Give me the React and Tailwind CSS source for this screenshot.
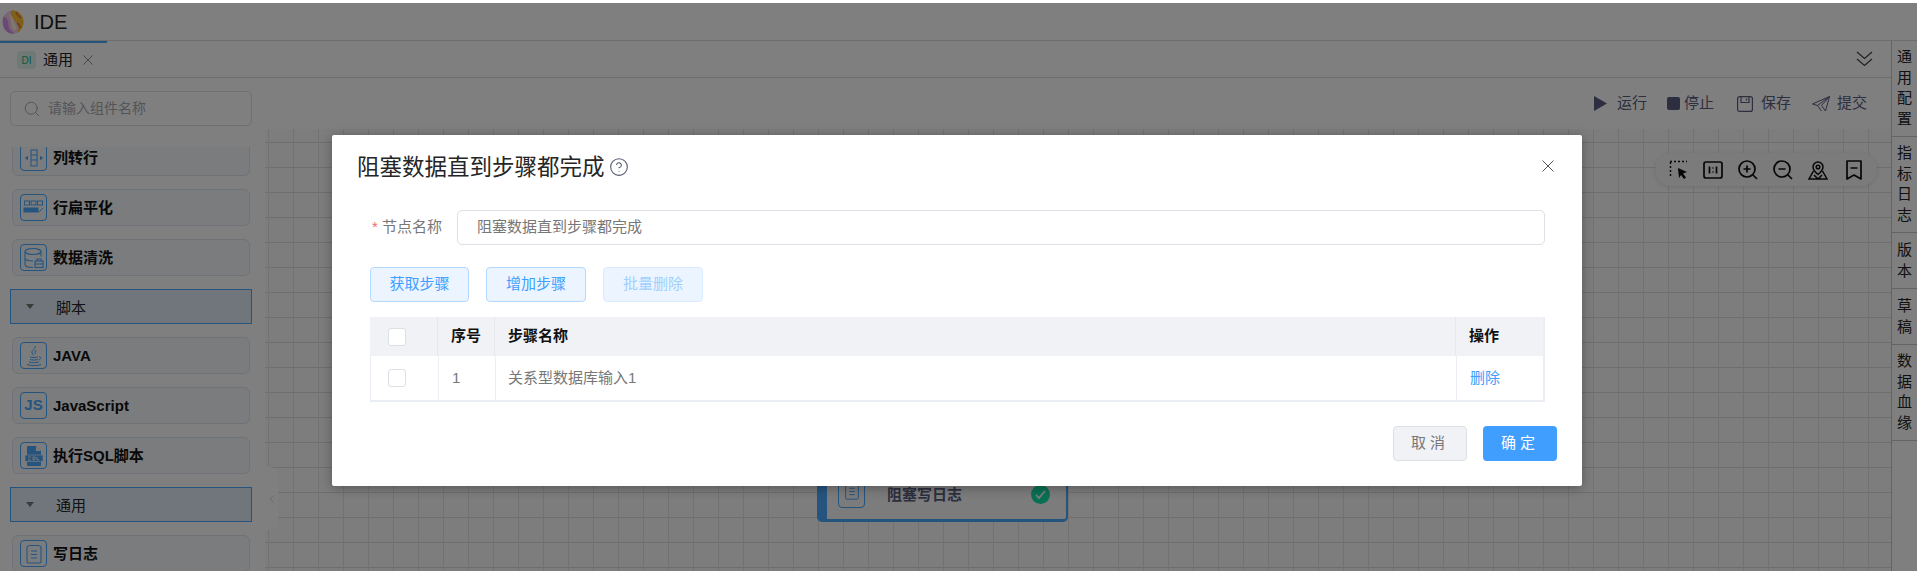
import React from "react";
import { Search, CircleHelp, ChevronLeft } from "lucide-react";

const Box = ({ children }) => (
  <span className="flex h-[27px] w-[27px] shrink-0 items-center justify-center rounded-[4px] border border-[#4aa8ff] text-[#4aa8ff]">
    {children}
  </span>
);

const Cross = ({ size, color, className }) => (
  <svg className={className} width={size} height={size} viewBox="0 0 12 12" fill="none" stroke={color} strokeWidth="1">
    <path d="M.5.500l11 11M11.500.500l-11 11" />
  </svg>
);

const IconPivot = () => (
  <svg width="20" height="20" viewBox="0 0 20 20" fill="none" stroke="currentColor" strokeWidth="1">
    <rect x="7" y="2" width="6" height="16" />
    <path d="M7 7h6M7 12h6" />
    <path d="M1.500 10l2-1.500v3zM18.500 10l-2-1.500v3z" fill="currentColor" />
  </svg>
);
const IconFlat = () => (
  <svg width="22" height="20" viewBox="0 0 22 20" fill="none" stroke="currentColor">
    <rect x="1.500" y="3" width="5" height="4" />
    <rect x="8" y="3" width="5" height="4" />
    <rect x="14.500" y="3" width="5" height="4" />
    <rect x="1" y="10" width="14" height="4" fill="currentColor" />
    <path d="M16 14l4-4" />
  </svg>
);
const IconDb = () => (
  <svg width="22" height="22" viewBox="0 0 22 22" fill="none" stroke="currentColor" strokeWidth="1.100">
    <ellipse cx="10" cy="4.500" rx="8" ry="3" />
    <path d="M2 4.500v13c0 1.700 3.500 3 8 3M18 4.500v5M2 11c0 1.700 3.500 3 8 3" />
    <rect x="12" y="14" width="8" height="6.500" />
    <path d="M14 14v-2h4v2M12 17h8" />
  </svg>
);
const IconJava = () => (
  <svg width="20" height="22" viewBox="0 0 20 22" fill="none" stroke="currentColor" strokeWidth="1">
    <path d="M11 1c1 3-4 4-3 7 .3 1 1 1.500 1.500 2.500M12 5c-1 1.500-1.500 2.500-.5 4" />
    <path d="M6 12c2 .7 6 .7 8-.2M6 14.500c2 .7 6 .7 8 0M5 17c3 1 8 1 10-.2M3 19.500c4 1.500 11 1.500 14 0M15 12c2-.5 3 1.500 0 3" />
  </svg>
);
const IconSql = () => (
  <svg width="20" height="22" viewBox="0 0 20 22">
    <path d="M4 1h8l5 5v14a1 1 0 0 1-1 1H4a1 1 0 0 1-1-1V2a1 1 0 0 1 1-1z" fill="currentColor" />
    <rect x="1" y="10" width="18" height="6.500" rx="1" fill="currentColor" stroke="#f3f7fb" strokeWidth="0.700" />
    <path d="M12 1v5h5z" fill="#f3f7fb" />
    <path d="M4 12h3M4 15h3M9 12h2v3H9zM13 12v3h2.500" stroke="#f3f7fb" strokeWidth="0.900" fill="none" />
  </svg>
);
const IconLog = ({ size = 22 }) => (
  <svg width={size} height={size} viewBox="0 0 22 22" fill="none" stroke="currentColor" strokeWidth="1.100">
    <path d="M6 3h-.5A1.500 1.500 0 0 0 4 4.500v14A1.500 1.500 0 0 0 5.500 20h11a1.500 1.500 0 0 0 1.500-1.500v-14A1.500 1.500 0 0 0 16.500 3H16" />
    <path d="M6 2.500h10M8 8h6M8 11.500h6M8 15h6" />
  </svg>
);

const Item = ({ icon, children }) => (
  <div className="flex h-[37px] items-center gap-[6px] rounded-[6px] border border-[#dfe5ec] bg-[#f4f8fc] pl-[7px] text-[15px] font-bold text-[#111]">
    {icon}
    <span className="pt-[2px]">{children}</span>
  </div>
);

const Group = ({ children }) => (
  <div className="-mx-[2px] flex h-[35px] items-center border border-[#4aa8ff] bg-[#e2ecf8] text-[15px] text-[#222]">
    <span className="ml-[15px] h-0 w-0 border-x-[4px] border-t-[5px] border-x-transparent border-t-[#777]"></span>
    <span className="ml-[22px] pt-[3px]">{children}</span>
  </div>
);

const Tool = ({ icon, label, gap }) => (
  <div className={`flex items-center ${gap}`}>
    {icon}
    <span>{label}</span>
  </div>
);

const Side = ({ children, pad }) => (
  <div className={`flex justify-center border-b border-[#c9c9c9] pb-[7px] text-[15px] leading-[20.500px] ${pad}`}>
    <span className="w-[15px] break-all">{children}</span>
  </div>
);

export default function App() {
  return (
    <div
      className="relative flex h-[571px] flex-col overflow-hidden bg-white text-[#303133]"
      style={{ fontFamily: '"Liberation Sans","Noto Sans CJK SC",sans-serif' }}
    >
      {/* top bar */}
      <header className="flex h-[41px] shrink-0 items-center border-b border-[#d8d8d8] pt-[3px]">
        <svg className="ml-[2px]" width="22" height="24" viewBox="0 0 22 24">
          <ellipse cx="11" cy="12" rx="10.500" ry="11.500" fill="#f0c8e8" />
          <path d="M9 .5c7-1 12.500 4.500 12.500 11.500 0 5-3 9-6.500 11 2.500-4.500 2-8-1-11-3-3-5.500-6.500-5-11.500z" fill="#ffc030" />
          <path d="M1.500 6.500c3 1 5 4 5 8s2.500 7 6 9c-5.500 1-10.500-3-11.500-8.500-.4-3 0-6 .5-8.500z" fill="#d890ec" />
          <path d="M6 3c3 2 5 5 6 8s2 5 3 7c-1 1.500-2 2.500-3 3-2-3-3-6-3-9s-1-6-3-9z" fill="#fff0d8" />
          <path d="M14 2c1 3 3 5 5 6M15 13c2 1 3 3 3 5" stroke="#e07828" strokeWidth="1.500" fill="none" />
        </svg>
        <span className="ml-[10px] text-[20px] text-[#222]">IDE</span>
      </header>

      <div className="flex min-h-0 flex-1">
        <div className="flex min-w-0 flex-1 flex-col">
          {/* tab bar */}
          <div className="flex h-[37px] shrink-0 items-center border-b border-[#d8d8d8] pr-[18px]">
            <div className="flex h-full w-[107px] items-center border-t-2 border-[#4aa8ff] pl-[17px]">
              <span className="flex h-[18px] w-[19px] items-center justify-center rounded-[4px] bg-[#dff5ee] text-[10px] text-[#12b080]">DI</span>
              <span className="ml-[7px] text-[15px] text-[#222]">通用</span>
              <Cross className="ml-[10px]" size={10} color="#777" />
            </div>
            <svg className="ml-auto" width="17" height="16" viewBox="0 0 17 16" fill="none" stroke="#444" strokeWidth="1.200">
              <path d="M1 1l7.500 6.500L16 1M1 8l7.500 6.500L16 8" />
            </svg>
          </div>

          <div className="flex min-h-0 flex-1">
            <aside className="flex w-[265px] shrink-0 flex-col pl-[10px] pr-[13px] pt-[13px]">
              <div className="flex h-[35px] shrink-0 items-center rounded-[5px] border border-[#dcdfe6] pl-[12px] text-[14px] text-[#a8abb2]">
                <Search size={18} strokeWidth={1.100} color="#999" />
                <span className="ml-[7px]">请输入组件名称</span>
              </div>
              <div className="mt-[21px] min-h-0 flex-1 overflow-hidden px-[2px]">
                <div className="-mt-[8px] flex flex-col gap-[13px]">
                  <Item icon={<Box><IconPivot /></Box>}>列转行</Item>
                  <Item icon={<Box><IconFlat /></Box>}>行扁平化</Item>
                  <Item icon={<Box><IconDb /></Box>}>数据清洗</Item>
                  <Group>脚本</Group>
                  <Item icon={<Box><IconJava /></Box>}>JAVA</Item>
                  <Item icon={<Box><span className="text-[15px] font-bold">JS</span></Box>}>JavaScript</Item>
                  <Item icon={<Box><IconSql /></Box>}>执行SQL脚本</Item>
                  <Group>通用</Group>
                  <Item icon={<Box><IconLog /></Box>}>写日志</Item>
                </div>
              </div>
            </aside>

            <main className="flex min-w-0 flex-1 flex-col">
              <div className="flex h-[51px] shrink-0 items-center justify-end pr-[24px] text-[15px] text-[#5a5d80]">
                <Tool
                  gap="gap-[10px]"
                  label="运行"
                  icon={<svg width="13" height="15" viewBox="0 0 13 15"><path d="M0 0l13 7.500L0 15z" fill="#5a5d80" /></svg>}
                />
                <div className="ml-[20px]">
                  <Tool
                    gap="gap-[4px]"
                    label="停止"
                    icon={<span className="h-[13px] w-[13px] rounded-[2px] bg-[#5a5d80]"></span>}
                  />
                </div>
                <div className="ml-[23px]">
                  <Tool
                    gap="gap-[8px]"
                    label="保存"
                    icon={
                      <svg width="16" height="16" viewBox="0 0 16 16" fill="none" stroke="#5a5d80" strokeWidth="1.200">
                        <rect x="0.600" y="0.600" width="14.800" height="14.800" rx="2" />
                        <path d="M4 1v5.500h8V1M9.500 2.500v2" />
                      </svg>
                    }
                  />
                </div>
                <div className="ml-[21px]">
                  <Tool
                    gap="gap-[7px]"
                    label="提交"
                    icon={
                      <svg width="18" height="16" viewBox="0 0 18 16" fill="none" stroke="#5a5d80" strokeWidth="1">
                        <path d="M17.500.500L.500 8l5 1.500L17.500.500l-4 14.500-4-5.500zM5.500 9.500L9.500 15" />
                      </svg>
                    }
                  />
                </div>
              </div>

              <div className="relative min-h-0 flex-1 bg-[#fafafa] bg-[linear-gradient(to_right,#e4e4e4_1px,transparent_1px),linear-gradient(to_bottom,#dcdcdc_1px,transparent_1px)] bg-[size:25px_25px] bg-[position:3px_13px]">
                {/* collapse handle */}
                <div className="absolute left-0 top-[338px] flex h-[63px] w-[13px] items-center justify-center rounded-r-[8px] bg-white">
                  <ChevronLeft size={22} strokeWidth={0.900} color="#aaa" />
                </div>

                {/* node on the canvas */}
                <div className="absolute left-[552px] top-[300px] flex h-[93px] w-[251px] items-end rounded-[5px] border-b-[3px] border-l-[10px] border-r-2 border-t-2 border-[#4aa8ff] bg-[#f8f8f8] pb-[11px]">
                  <span className="ml-[11px] flex h-[34px] w-[27px] items-center justify-center rounded-[4px] border border-[#4aa8ff] text-[#4aa8ff]">
                    <IconLog size={20} />
                  </span>
                  <span className="mb-[2px] ml-[22px] text-[15px] font-bold text-[#5a5d80]">阻塞写日志</span>
                  <svg className="mb-[4px] ml-auto mr-[16px]" width="19" height="19" viewBox="0 0 19 19">
                    <circle cx="9.500" cy="9.500" r="9.500" fill="#14e0a8" />
                    <path d="M5 10l3 3 6-7" fill="none" stroke="#fff" strokeWidth="1.600" />
                  </svg>
                </div>

                {/* floating tools */}
                <div className="absolute left-[1390px] top-[24px] flex h-[33px] w-[222px] items-center rounded-full bg-[#f6f6f6] pl-[14px] text-[#0c0c0c] shadow-[0_1px_4px_rgba(0,0,0,0.12)]">
                  <svg width="20" height="20" viewBox="0 0 20 20" fill="none" stroke="currentColor">
                    <path d="M1 1.500h17M1.500 2v15" strokeDasharray="2 2" strokeWidth="1.400" />
                    <path d="M9 8l9 4-4 1.500 3 4-2 1.500-3-4-2 3z" fill="currentColor" stroke="none" />
                  </svg>
                  <svg className="ml-[14px]" width="20" height="18" viewBox="0 0 20 18" fill="none" stroke="currentColor" strokeWidth="1.700" strokeLinejoin="round">
                    <rect x="1" y="1" width="18" height="16" rx="2" />
                    <path d="M6.500 5.500v7M13.500 5.500v7M10 6.500v1M10 10.500v1" />
                  </svg>
                  <svg className="ml-[15px]" width="20" height="20" viewBox="0 0 20 20" fill="none" stroke="currentColor" strokeWidth="1.700">
                    <circle cx="9" cy="9" r="8" />
                    <path d="M15 15l4 4M9 5.500v7M5.500 9h7" />
                  </svg>
                  <svg className="ml-[15px]" width="20" height="20" viewBox="0 0 20 20" fill="none" stroke="currentColor" strokeWidth="1.700">
                    <circle cx="9" cy="9" r="8" />
                    <path d="M15 15l4 4M5.500 9h7" />
                  </svg>
                  <svg className="ml-[15px]" width="20" height="20" viewBox="0 0 20 20" fill="none" stroke="currentColor" strokeWidth="1.500">
                    <path d="M10 14.500c-3-2.500-5-4.500-5-7.500a5 5 0 0 1 10 0c0 3-2 5-5 7.500z" />
                    <circle cx="10" cy="7" r="1.800" />
                    <path d="M5.500 11L1 19h18l-4.500-8M6 15l4 4 4-4" />
                  </svg>
                  <svg className="ml-[17px]" width="18" height="20" viewBox="0 0 18 20" fill="none" stroke="currentColor" strokeWidth="1.700" strokeLinejoin="round">
                    <path d="M2 1h14v18l-7-4-7 4zM5.500 8h7" />
                  </svg>
                </div>
              </div>
            </main>
          </div>
        </div>

        {/* right rail */}
        <div className="w-[26px] shrink-0 border-l border-[#c9c9c9] text-[#222]">
          <Side pad="pt-[6px]">通用配置</Side>
          <Side pad="pt-[6px]">指标日志</Side>
          <Side pad="pt-[7px]">版本</Side>
          <Side pad="pt-[7px]">草稿</Side>
          <Side pad="pt-[6px]">数据血缘</Side>
        </div>
      </div>

      {/* modal mask */}
      <div className="absolute inset-x-0 bottom-0 top-[3px] bg-black/50"></div>

      {/* dialog */}
      <div className="absolute left-[332px] top-[135px] flex h-[351px] w-[1250px] flex-col rounded-[2px] bg-white shadow-[0_2px_12px_rgba(0,0,0,0.3)]">
        <div className="relative flex h-[75px] shrink-0 items-start pl-[25px] pt-[17px]">
          <span className="text-[22.500px] leading-[32px] text-[#262626]">阻塞数据直到步骤都完成</span>
          <CircleHelp className="ml-[4px] mt-[5px]" size={20} strokeWidth={1.300} color="#555a70" />
          <Cross className="absolute right-[28px] top-[25px]" size={12} color="#555" />
        </div>

        <div className="flex h-[35px] shrink-0 items-center pl-[40px] pr-[37px] text-[15px]">
          <span className="w-[10px] text-[#f56c6c]">*</span>
          <span className="w-[75px] text-[#777]">节点名称</span>
          <div className="flex h-full flex-1 items-center rounded-[5px] border border-[#dcdfe6] pl-[19px] text-[#777]">阻塞数据直到步骤都完成</div>
        </div>

        <div className="mt-[22px] flex shrink-0 gap-[17px] pl-[38px] text-[15px]">
          <div className="flex h-[35px] w-[99px] items-center justify-center rounded-[4px] border border-[#b3d8ff] bg-[#ecf5ff] text-[#409eff]">获取步骤</div>
          <div className="flex h-[35px] w-[100px] items-center justify-center rounded-[4px] border border-[#b3d8ff] bg-[#ecf5ff] text-[#409eff]">增加步骤</div>
          <div className="flex h-[35px] w-[100px] items-center justify-center rounded-[4px] border border-[#d9ecff] bg-[#ecf5ff] text-[#a0cfff]">批量删除</div>
        </div>

        <div className="ml-[38px] mr-[37px] mt-[15px] shrink-0 border-b-2 border-r-2 border-[#ebeef5] text-[15px]">
          <div className="grid h-[39px] grid-cols-[68px_57px_961px_1fr] bg-[#f0f2f5] font-bold text-[#111]">
            <div className="flex items-center border-r border-[#e6e8ee] pl-[18px]">
              <span className="h-[18px] w-[18px] rounded-[3px] border border-[#dcdfe6] bg-white"></span>
            </div>
            <div className="flex items-center border-r border-[#e6e8ee] pl-[13px]">序号</div>
            <div className="flex items-center border-r border-[#e6e8ee] pl-[13px]">步骤名称</div>
            <div className="flex items-center pl-[13px]">操作</div>
          </div>
          <div className="grid h-[44px] grid-cols-[68px_57px_961px_1fr] border-l border-[#ebeef5] text-[#777]">
            <div className="flex items-center border-r border-[#ebeef5] pl-[17px]">
              <span className="h-[18px] w-[18px] rounded-[3px] border border-[#dcdfe6] bg-white"></span>
            </div>
            <div className="flex items-center border-r border-[#ebeef5] pl-[13px]">1</div>
            <div className="flex items-center border-r border-[#ebeef5] pl-[12px]">关系型数据库输入1</div>
            <div className="flex items-center pl-[13px] text-[#409eff]">删除</div>
          </div>
        </div>

        <div className="mr-[25px] mt-[24px] flex shrink-0 justify-end gap-[16px] text-[15px]">
          <div className="flex h-[35px] w-[74px] items-center justify-center rounded-[4px] border border-[#dcdfe6] bg-[#f0f2f5] tracking-[4px] text-[#777]">取消</div>
          <div className="flex h-[35px] w-[74px] items-center justify-center rounded-[4px] bg-[#409eff] tracking-[4px] text-white">确定</div>
        </div>
      </div>
    </div>
  );
}
